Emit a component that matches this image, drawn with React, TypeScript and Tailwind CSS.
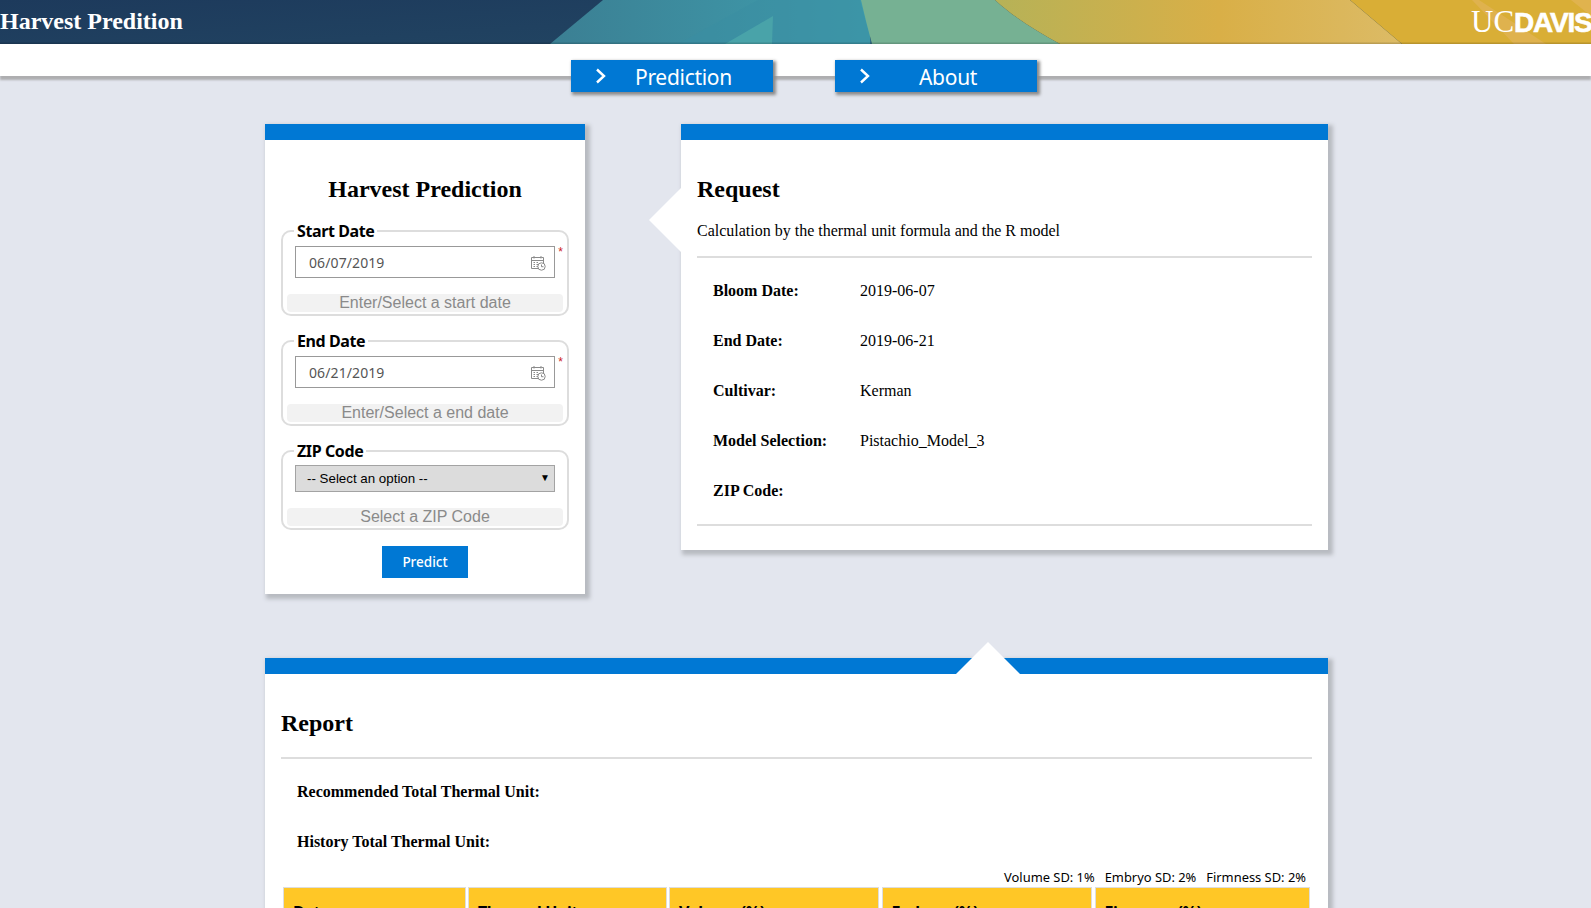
const serif = "font-['Liberation_Serif',serif]";

const requestRows = [
  { label: "Bloom Date:", value: "2019-06-07" },
  { label: "End Date:", value: "2019-06-21" },
  { label: "Cultivar:", value: "Kerman" },
  { label: "Model Selection:", value: "Pistachio_Model_3" },
  { label: "ZIP Code:", value: "" },
];

const columns = [
  { name: "Date", width: "w-[182.5px]" },
  { name: "Thermal Unit", width: "w-[198.5px]" },
  { name: "Volume (%)", width: "w-[210px]" },
  { name: "Embryo (%)", width: "w-[210.5px]" },
  { name: "Firmness (%)", width: "w-[215px]" },
];

function Chevron() {
  return (
    <svg width="12" height="16" viewBox="0 0 12 16" fill="none" stroke="white" strokeWidth="2.4">
      <path d="M2 1.5 L9 8 L2 14.5" />
    </svg>
  );
}

function CalendarIcon() {
  return (
    <svg className="mt-[2px]" width="16" height="16" viewBox="0 0 16 16" fill="none" stroke="#8a8a8a" strokeWidth="1">
      <path d="M11.5 2.5 H13.5 V8 M8 13.5 H1.5 V2.5 H11.5" />
      <path d="M4 1 V3.5 M11 1 V3.5 M1.5 5.5 H13.5" />
      <path d="M3.5 7.5 H5 M6.5 7.5 H8 M3.5 9.5 H5 M6.5 9.5 H8 M3.5 11.5 H5 M6.5 11.5 H8" />
      <circle cx="11.5" cy="11.5" r="3.7" fill="white" />
      <path d="M11.5 9.5 V11.7 H13.5" />
    </svg>
  );
}

function HeaderArt() {
  return (
    <svg className="absolute inset-0 w-full h-full" viewBox="0 0 1591 44" preserveAspectRatio="none">
      <defs>
        <linearGradient id="navy" x1="0" x2="1" y1="0" y2="0.4">
          <stop offset="0" stopColor="#1d3a5c" />
          <stop offset="1" stopColor="#234864" />
        </linearGradient>
        <linearGradient id="teal" x1="0" x2="1" y1="0" y2="0">
          <stop offset="0" stopColor="#3b7f93" />
          <stop offset="1" stopColor="#3f9eae" />
        </linearGradient>
        <linearGradient id="gold" x1="0" x2="1" y1="0" y2="0">
          <stop offset="0" stopColor="#b6b257" />
          <stop offset="0.55" stopColor="#d9af47" />
          <stop offset="1" stopColor="#dcbb66" />
        </linearGradient>
      </defs>
      <rect width="1591" height="44" fill="url(#navy)" />
      <path d="M603 0 H870 V44 H550 Z" fill="url(#teal)" />
      <path d="M758 0 H860 L872 44 H678 Z" fill="#3a8ea3" opacity="0.55" />
      <path d="M725 44 L773 16 L772 44 Z" fill="#49a3a9" />
      <path d="M861 0 H995 C1012 16 1035 30 1060 44 H872 Q866 22 861 0 Z" fill="#76b193" />
      <path d="M995 0 H1350 L1402 44 H1060 C1035 30 1012 16 995 0 Z" fill="url(#gold)" />
      <path d="M1350 0 H1591 V44 H1402 Z" fill="#d9ae36" />
      <path d="M1479 0 L1546 44 H1514 L1472 0 Z" fill="#dfb24e" />
      <path d="M1571 0 H1591 V16 Z" fill="#e0b34e" />
      <rect y="42.5" width="1591" height="1.5" fill="#000" opacity="0.15" />
    </svg>
  );
}

function NavButton({ label, textClass }: { label: string; textClass: string }) {
  return (
    <button className="w-[202px] h-[32px] bg-[#0078d4] shadow-[2px_2px_3px_1px_#8a8a8a] flex items-center pl-[24px] text-white text-[21px] tracking-[-0.3px] font-['Noto_Sans',sans-serif]">
      <Chevron />
      <span className={`pt-[4px] ${textClass}`}>{label}</span>
    </button>
  );
}

function DateField({ legend, value, hint }: { legend: string; value: string; hint: string }) {
  return (
    <fieldset className="border-2 border-[#ddd] rounded-[10px] h-[94px] px-[4px]">
      <legend className="ml-[7px] px-[3px] text-[16px] tracking-[-0.4px] font-bold leading-[18px] font-['Noto_Sans',sans-serif] text-black">{legend}</legend>
      <div className="mx-[8px] mt-[6px] h-[32px] border border-[#999] flex items-center justify-between pl-[13px] pr-[8px] relative">
        <span className="text-[14px] tracking-[0.1px] text-[#555] font-['Noto_Sans',sans-serif]">{value}</span>
        <CalendarIcon />
        <span className="absolute -right-[9px] -top-[3px] text-[#c22] text-[12px] leading-[16px] font-['Liberation_Sans',sans-serif]">*</span>
      </div>
      <div className="mt-[16px] h-[18px] bg-[#f2f2f2] rounded-[4px] text-center text-[16px] leading-[18px] text-[#8a8a8a] font-['Liberation_Sans',sans-serif]">{hint}</div>
    </fieldset>
  );
}

function Panel({ className, children }: { className: string; children: React.ReactNode }) {
  return (
    <section className={`bg-white border-t-[16px] border-[#0078d4] shadow-[3px_3px_4px_2px_#b8bbc1] relative ${className}`}>
      {children}
    </section>
  );
}

export default function App() {
  return (
    <div className={`h-screen overflow-hidden bg-[#e3e6ee] text-black ${serif}`}>
      <header className="h-[44px] relative overflow-hidden">
        <HeaderArt />
        <h1 className="absolute left-0 top-[5px] text-[24px] leading-[32px] font-bold text-white">Harvest Predition</h1>
        <div className="absolute left-[1471px] top-[4px] text-[31px] leading-[36px] text-white whitespace-nowrap">
          UC<span className="font-bold text-[28px] tracking-[-1.2px] [-webkit-text-stroke:0.6px_white] font-['Liberation_Sans',sans-serif]">DAVIS</span>
        </div>
      </header>

      <nav className="h-[32px] bg-white shadow-[0_4px_2px_#aeaeb0] relative">
        <div className="flex pt-[16px] pl-[571px] gap-[62px]">
          <NavButton label="Prediction" textClass="ml-[28px]" />
          <NavButton label="About" textClass="ml-[48px]" />
        </div>
      </nav>

      <main className="pl-[265px] pt-[48px]">
        <div className="flex gap-[96px] items-start">
          <Panel className="w-[320px] h-[470px]">
            <div className="px-[16px]">
              <h2 className="text-[24px] leading-[32px] font-bold text-center mt-[33px] mb-[17px]">Harvest Prediction</h2>
              <div className="flex flex-col gap-[16px]">
                <DateField legend="Start Date" value="06/07/2019" hint="Enter/Select a start date" />
                <DateField legend="End Date" value="06/21/2019" hint="Enter/Select a end date" />
                <fieldset className="border-2 border-[#ddd] rounded-[10px] h-[88px] px-[4px]">
                  <legend className="ml-[7px] px-[3px] text-[16px] tracking-[-0.4px] font-bold leading-[18px] font-['Noto_Sans',sans-serif]">ZIP Code</legend>
                  <div className="mx-[8px] mt-[5px] h-[27px] bg-[#dcdcdc] border border-[#a3a3a3] flex items-center justify-between pl-[11px] pr-[4px] text-[13.33px] font-['Liberation_Sans',sans-serif]">
                    <span>-- Select an option --</span>
                    <span className="text-[10px] leading-[10px] mb-[2px]">▼</span>
                  </div>
                  <div className="mt-[16px] h-[18px] bg-[#f2f2f2] rounded-[4px] text-center text-[16px] leading-[18px] text-[#8a8a8a] font-['Liberation_Sans',sans-serif]">Select a ZIP Code</div>
                </fieldset>
              </div>
              <button className="block mx-auto mt-[16px] w-[86px] h-[32px] bg-[#0078d4] text-white text-[13.5px] font-medium font-['Noto_Sans',sans-serif]">Predict</button>
            </div>
          </Panel>

          <Panel className="w-[647px] h-[426px]">
            <div className="absolute left-[-32px] top-[48px] w-0 h-0 border-y-[32px] border-y-transparent border-r-[32px] border-r-white" />
            <div className="px-[16px]">
              <h2 className="text-[24px] leading-[32px] font-bold mt-[33px] mb-[17px]">Request</h2>
              <p className="text-[16px] leading-[18px] pb-[16px] border-b-2 border-[#ddd]">Calculation by the thermal unit formula and the R model</p>
              <div className="px-[16px] pt-[8px] pb-[8px] border-b-2 border-[#ddd]">
                {requestRows.map((row) => (
                  <div key={row.label} className="flex items-center h-[50px] text-[16px]">
                    <span className="w-[147px] font-bold">{row.label}</span>
                    <span>{row.value}</span>
                  </div>
                ))}
              </div>
            </div>
          </Panel>
        </div>

        <Panel className="w-[1063px] mt-[64px] h-[400px]">
          <div className="absolute left-[691px] top-[-32px] w-0 h-0 border-x-[32px] border-x-transparent border-b-[32px] border-b-white" />
          <div className="px-[16px]">
            <h2 className="text-[24px] leading-[32px] font-bold mt-[33px] pb-[18px] border-b-2 border-[#ddd]">Report</h2>
            <div className="px-[16px] pt-[8px] text-[16px] font-bold">
              <div className="h-[50px] flex items-center">Recommended Total Thermal Unit:</div>
              <div className="h-[50px] flex items-center">History Total Thermal Unit:</div>
            </div>
            <div className="mt-[1px] flex justify-end gap-[10px] pr-[6px] text-[12.9px] leading-[18px] font-['Noto_Sans',sans-serif]">
              <span>Volume SD: 1%</span>
              <span>Embryo SD: 2%</span>
              <span>Firmness SD: 2%</span>
            </div>
            <div className="flex gap-[2.5px] ml-[2px] mt-[1px]">
              {columns.map((col) => (
                <div key={col.name} className={`${col.width} h-[50px] bg-[#ffc726] border border-[#ddd] pl-[9px] pt-[12px] text-[16px] tracking-[-0.4px] font-bold font-['Noto_Sans',sans-serif]`}>
                  {col.name}
                </div>
              ))}
            </div>
          </div>
        </Panel>
      </main>
    </div>
  );
}
